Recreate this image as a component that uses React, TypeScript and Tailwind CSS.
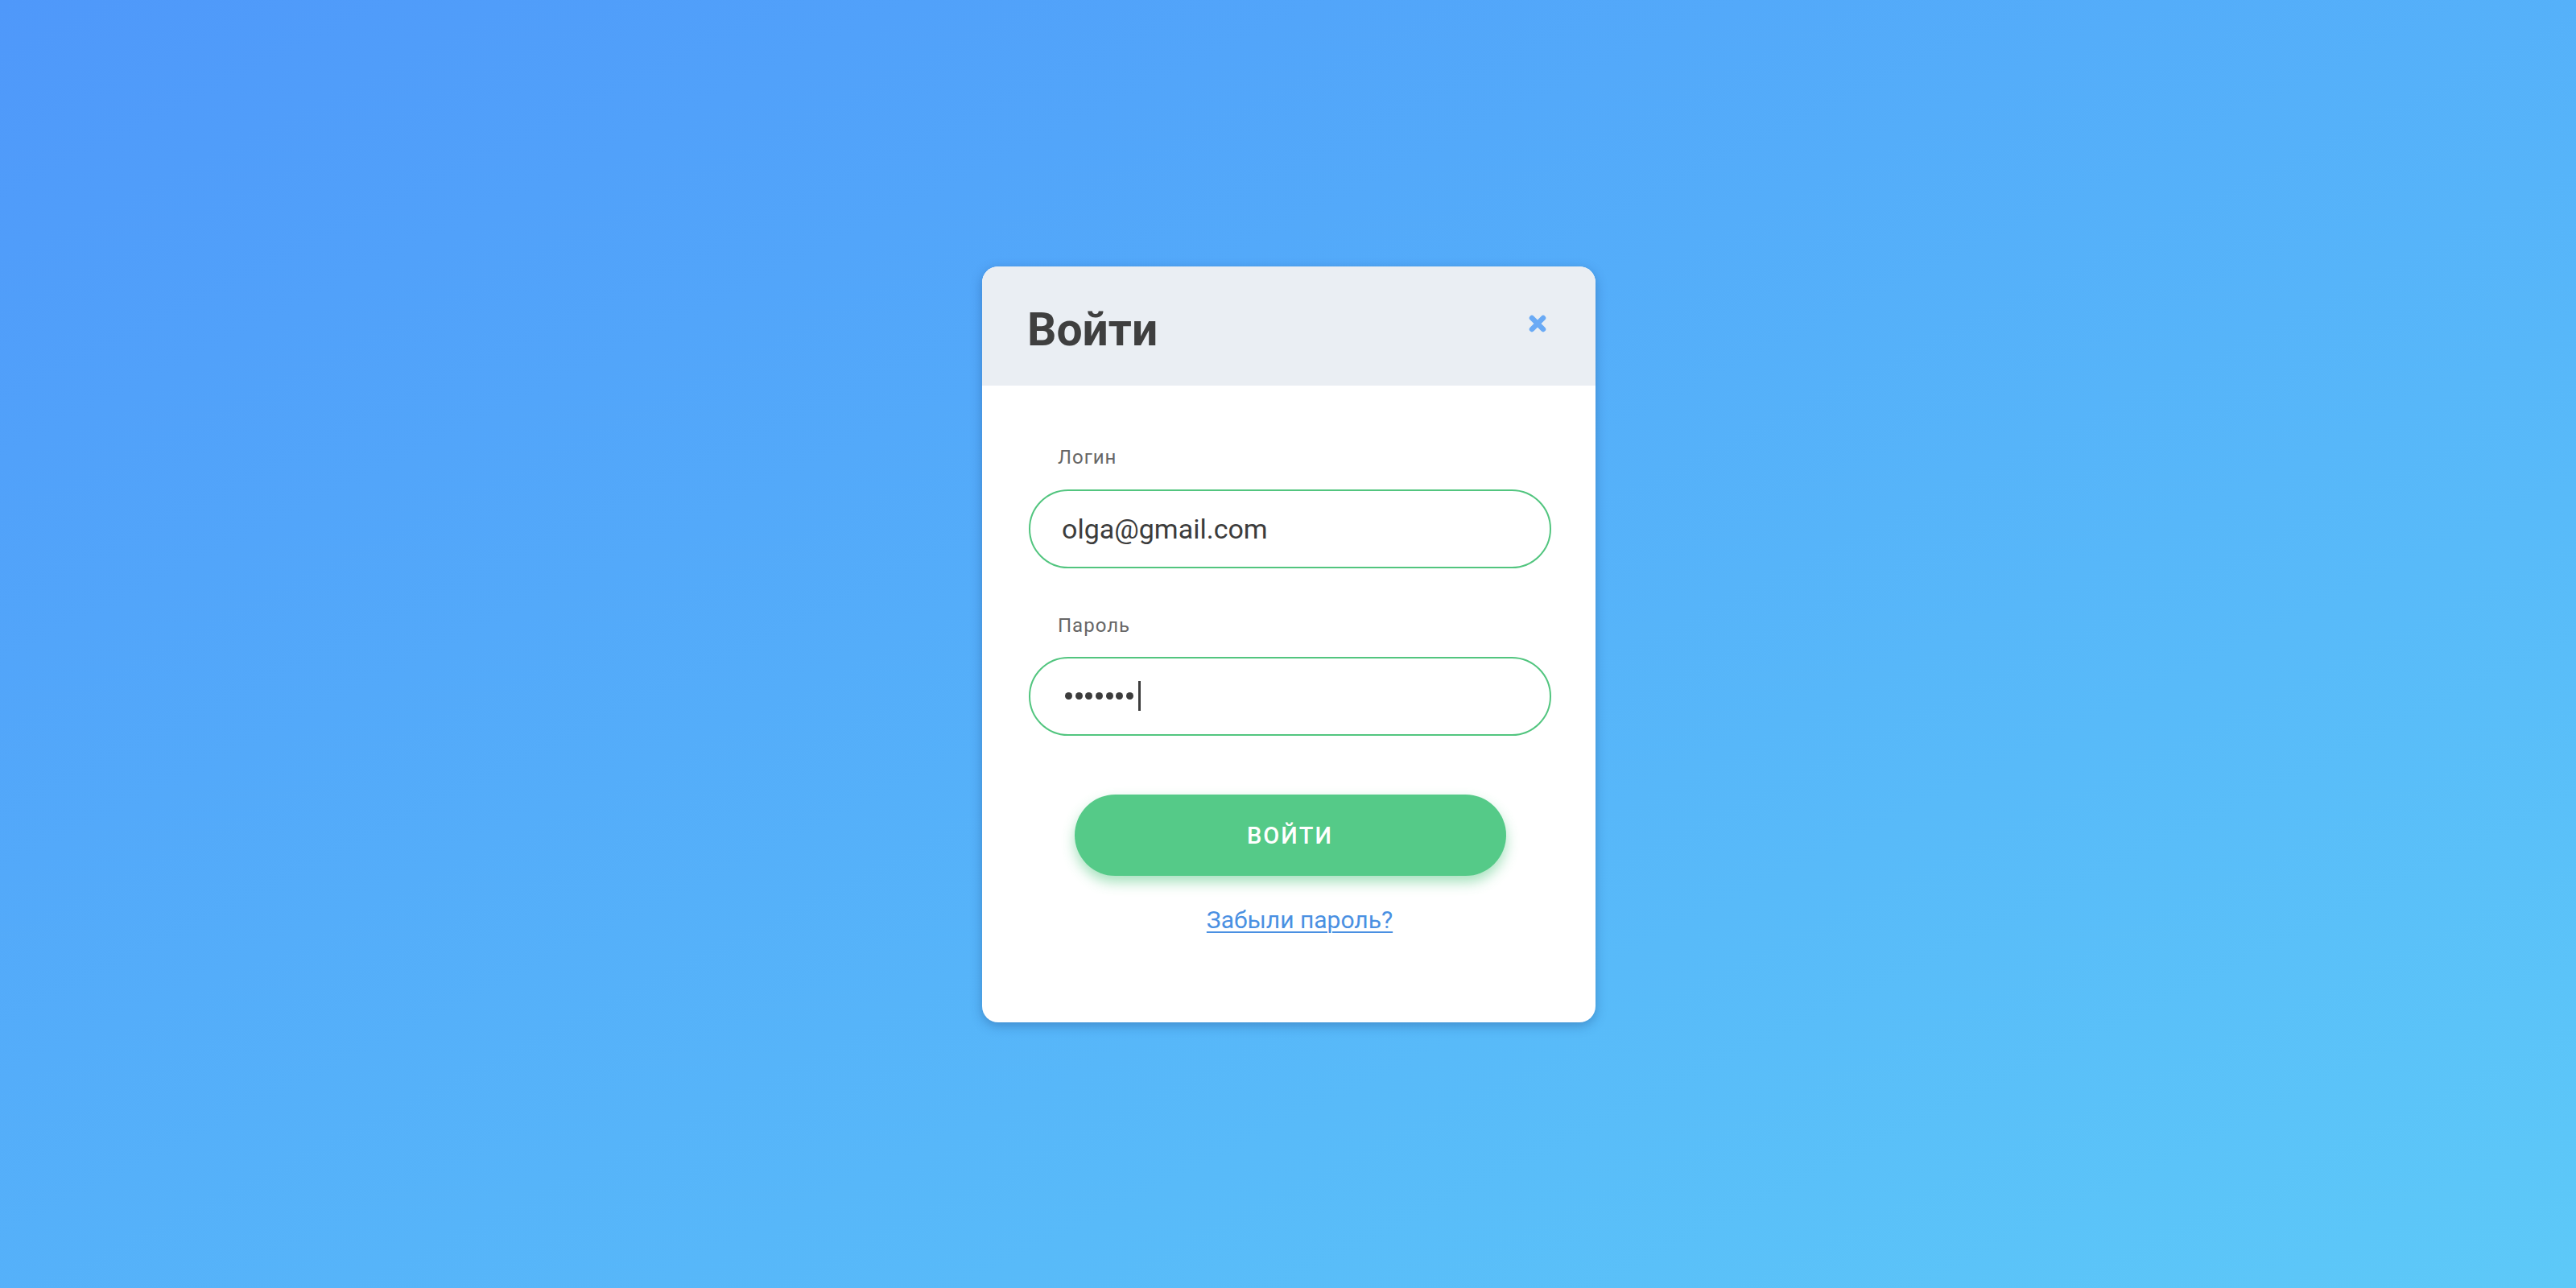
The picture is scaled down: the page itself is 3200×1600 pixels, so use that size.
import React from "react";

export default function App() {
  const font = { fontFamily: "Roboto, 'Noto Sans', 'Liberation Sans', sans-serif" };
  return (
    <div
      className="min-h-screen w-full flex items-center justify-center bg-linear-to-br from-[#4f98fa] to-[#5dc9f8]"
      style={font}
    >
      <div className="ml-[2px] w-[762px] bg-white rounded-[20px] overflow-hidden shadow-[0_4px_14px_rgba(20,60,120,0.35)]">
        {/* header */}
        <div className="h-[148px] bg-[#eaeef3] flex items-center justify-between pl-[56px] pr-[61px]">
          <h1 className="text-[57px] leading-none font-bold text-[#3f3f3f] mt-[9px]">Войти</h1>
          <button className="w-[22px] h-[22px] -mt-[6px] flex items-center justify-center" aria-label="Закрыть">
            <svg width="22" height="22" viewBox="0 0 22 22">
              <path d="M4 4 L18 18 M18 4 L4 18" stroke="#6aaaf5" strokeWidth="6.5" strokeLinecap="round" />
            </svg>
          </button>
        </div>

        {/* body */}
        <div className="pl-[58px] pr-[55px] pt-[75px] pb-[109px] flex flex-col">
          <label className="ml-[36px] text-[24px] tracking-[1px] leading-[28px] text-[#666666]">Логин</label>
          <div className="mt-[26px] h-[98px] rounded-full border-2 border-[#52c57f] flex items-center pl-[39px]">
            <span className="text-[34px] text-[#3c3c3c] leading-none">olga@gmail.com</span>
          </div>

          <label className="mt-[57px] ml-[36px] text-[24px] tracking-[1px] leading-[28px] text-[#666666]">Пароль</label>
          <div className="mt-[25px] h-[98px] rounded-full border-2 border-[#52c57f] flex items-center pl-[43px]">
            <div className="flex items-center gap-[3.7px]">
              <span className="w-[9px] h-[9px] rounded-full bg-[#3c3c3c]" />
              <span className="w-[9px] h-[9px] rounded-full bg-[#3c3c3c]" />
              <span className="w-[9px] h-[9px] rounded-full bg-[#3c3c3c]" />
              <span className="w-[9px] h-[9px] rounded-full bg-[#3c3c3c]" />
              <span className="w-[9px] h-[9px] rounded-full bg-[#3c3c3c]" />
              <span className="w-[9px] h-[9px] rounded-full bg-[#3c3c3c]" />
              <span className="w-[9px] h-[9px] rounded-full bg-[#3c3c3c]" />
            </div>
            <span className="ml-[6px] w-[3px] h-[37px] bg-[#3c3c3c]" />
          </div>

          <div className="mt-[73px] flex justify-center">
            <button className="w-[536px] h-[101px] pt-[3px] rounded-full bg-[#55ca88] text-white text-[29px] font-medium uppercase tracking-[2px] shadow-[0_8px_16px_rgba(60,190,110,0.45)]">
              войти
            </button>
          </div>

          <div className="mt-[37px] flex justify-center pl-[24px]">
            <a href="#" className="text-[30px] leading-[36px] text-[#4a90e2] underline underline-offset-[4px] decoration-[2px]">
              Забыли пароль?
            </a>
          </div>
        </div>
      </div>
    </div>
  );
}
